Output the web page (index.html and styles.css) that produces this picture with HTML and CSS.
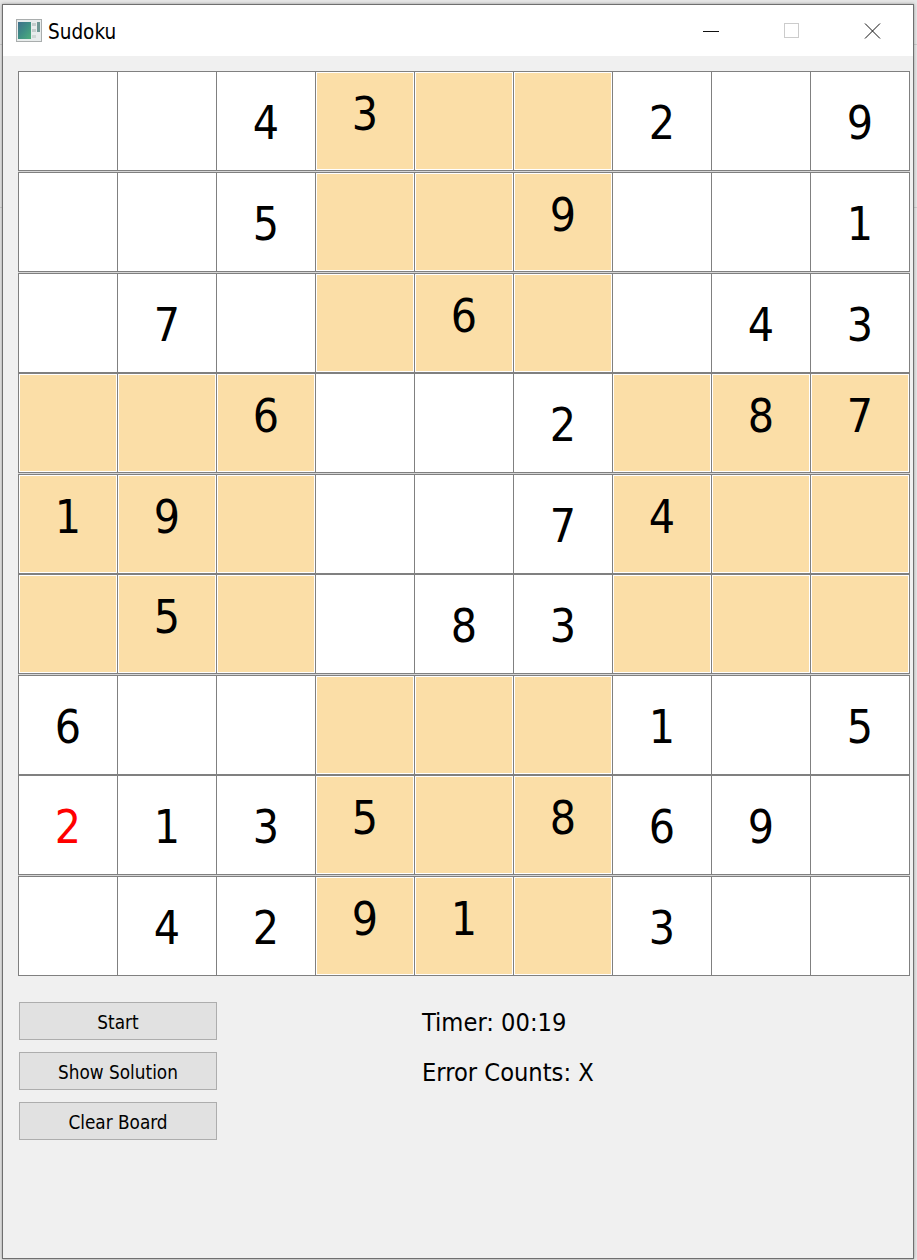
FILE: index.html
```html
<!DOCTYPE html>
<html lang="en">
<head>
    <meta charset="UTF-8">
    <meta name="viewport" content="width=device-width, initial-scale=1.0">
    <title>Sudoku</title>
    <link rel="stylesheet" href="styles.css">
</head>
<body>
    <div class="window">
        <div class="title-bar">
            <svg class="app-icon" width="26" height="23" viewBox="0 0 26 23">
                <defs>
                    <linearGradient id="icon-fill" x1="0" y1="0" x2="1" y2="1">
                        <stop offset="0" stop-color="#3f6f8c"/>
                        <stop offset="0.5" stop-color="#3f8f84"/>
                        <stop offset="1" stop-color="#4fae7c"/>
                    </linearGradient>
                </defs>
                <rect x="0.5" y="0.5" width="25" height="22" fill="#e8ecec" stroke="#a9adad"/>
                <rect x="2" y="3" width="13" height="17" fill="url(#icon-fill)"/>
                <rect x="16" y="4" width="4" height="3" fill="#c3cccb"/>
                <rect x="16" y="10" width="4" height="3" fill="#c3cccb"/>
                <rect x="16" y="16" width="4" height="3" fill="#cfd7d5"/>
                <rect x="21" y="3" width="3" height="10" fill="#6f9794"/>
            </svg>
            <span class="title-text">Sudoku</span>
            <div class="window-buttons">
                <svg class="win-btn" width="80" height="16" viewBox="0 0 80 16"><path d="M31 8.5h16" stroke="#111" fill="none"/></svg>
                <svg class="win-btn" width="80" height="16" viewBox="0 0 80 16"><rect x="32.5" y="0.5" width="14" height="14" stroke="#ccc" fill="none"/></svg>
                <svg class="win-btn" width="80" height="16" viewBox="0 0 80 16"><path d="M33 .5l15 15M48 .5l-15 15" stroke="#111" fill="none"/></svg>
            </div>
        </div>
        <div class="content">
            <div class="board" id="board"></div>
            <div class="controls">
                <div class="buttons">
                    <button class="btn">Start</button>
                    <button class="btn">Show Solution</button>
                    <button class="btn">Clear Board</button>
                </div>
                <div class="status">
                    <div class="status-row">Timer: 00:19</div>
                    <div class="status-row">Error Counts: X</div>
                </div>
            </div>
        </div>
    </div>
    <script>
        const puzzle = [
            '..43..2.9',
            '..5..9..1',
            '.7..6..43',
            '..6..2.87',
            '19...74..',
            '.5..83...',
            '6.....1.5',
            '2135.869.',
            '.4291.3..'
        ];
        const board = document.getElementById('board');
        puzzle.forEach((row, r) => {
            [...row].forEach((ch, c) => {
                const cell = document.createElement('div');
                cell.className = 'cell';
                const inRowBand = Math.floor(r / 3) === 1;
                const inColBand = Math.floor(c / 3) === 1;
                if (inRowBand !== inColBand) cell.classList.add('shaded');
                if (r === 7 && c === 0) cell.classList.add('error');
                if (ch !== '.') cell.textContent = ch;
                board.appendChild(cell);
            });
        });
    </script>
</body>
</html>
```

FILE: styles.css
```css
body {
    margin: 0;
    height: 1260px;
    overflow: hidden;
    background: linear-gradient(#cdcdcd, #cdcdcd) 0 44px / 100% 1px no-repeat,
        linear-gradient(#cdcdcd, #cdcdcd) 0 207px / 100% 1px no-repeat,
        #e6e6e6;
    font-family: "DejaVu Sans Condensed", "DejaVu Sans", sans-serif;
    font-stretch: condensed;
    color: #000;
    padding: 4px 3px 3px 2px;
    box-sizing: border-box;
}
.window {
    height: 100%;
    display: flex;
    flex-direction: column;
    border: 1px solid #6f6f6f;
    box-shadow: 0 0 3px rgba(0, 0, 0, 0.35);
    background: #f0f0f0;
}
.title-bar {
    height: 51px;
    flex: none;
    display: flex;
    align-items: center;
    background: #fff;
    padding-left: 13px;
}
.title-text {
    margin-left: 6px;
    margin-top: 2px;
    font-size: 20.5px;
}
.window-buttons {
    margin-left: auto;
    margin-right: 1px;
    display: flex;
}
.win-btn {
    display: block;
}
.content {
    flex: 1;
    padding: 15px 3px 0 15px;
}
.board {
    display: grid;
    grid-template-columns: repeat(8, 99px) 100px;
    grid-template-rows: 101px 101px 100px 101px 100px 101px 100px 101px 100px;
    width: 892px;
    background: #d6d6d6;
}
.cell {
    height: 100px;
    box-sizing: border-box;
    background: #fff;
    border: 1px solid #808080;
    border-right: none;
    display: flex;
    align-items: center;
    justify-content: center;
    padding-top: 4px;
    font-size: 46px;
    line-height: 1;
}
.cell:nth-child(9n) {
    border-right: 1px solid #808080;
}
.shaded {
    background: #fbdea7;
    box-shadow: inset 0 0 0 1px #fff;
    padding-bottom: 18px;
}
.error {
    color: #f00;
}
.controls {
    display: flex;
    margin-top: 26px;
    margin-left: 1px;
}
.buttons {
    display: flex;
    flex-direction: column;
    gap: 12px;
    width: 198px;
}
.btn {
    height: 38px;
    background: #e1e1e1;
    border: 1px solid #adadad;
    font-family: inherit;
    font-stretch: condensed;
    font-size: 18.8px;
    color: #000;
    padding: 2px 0 0;
}
.status {
    margin-left: 205px;
    display: flex;
    flex-direction: column;
    gap: 12px;
}
.status-row {
    height: 38px;
    box-sizing: border-box;
    padding-top: 2px;
    display: flex;
    align-items: center;
    font-size: 25.2px;
}
```
